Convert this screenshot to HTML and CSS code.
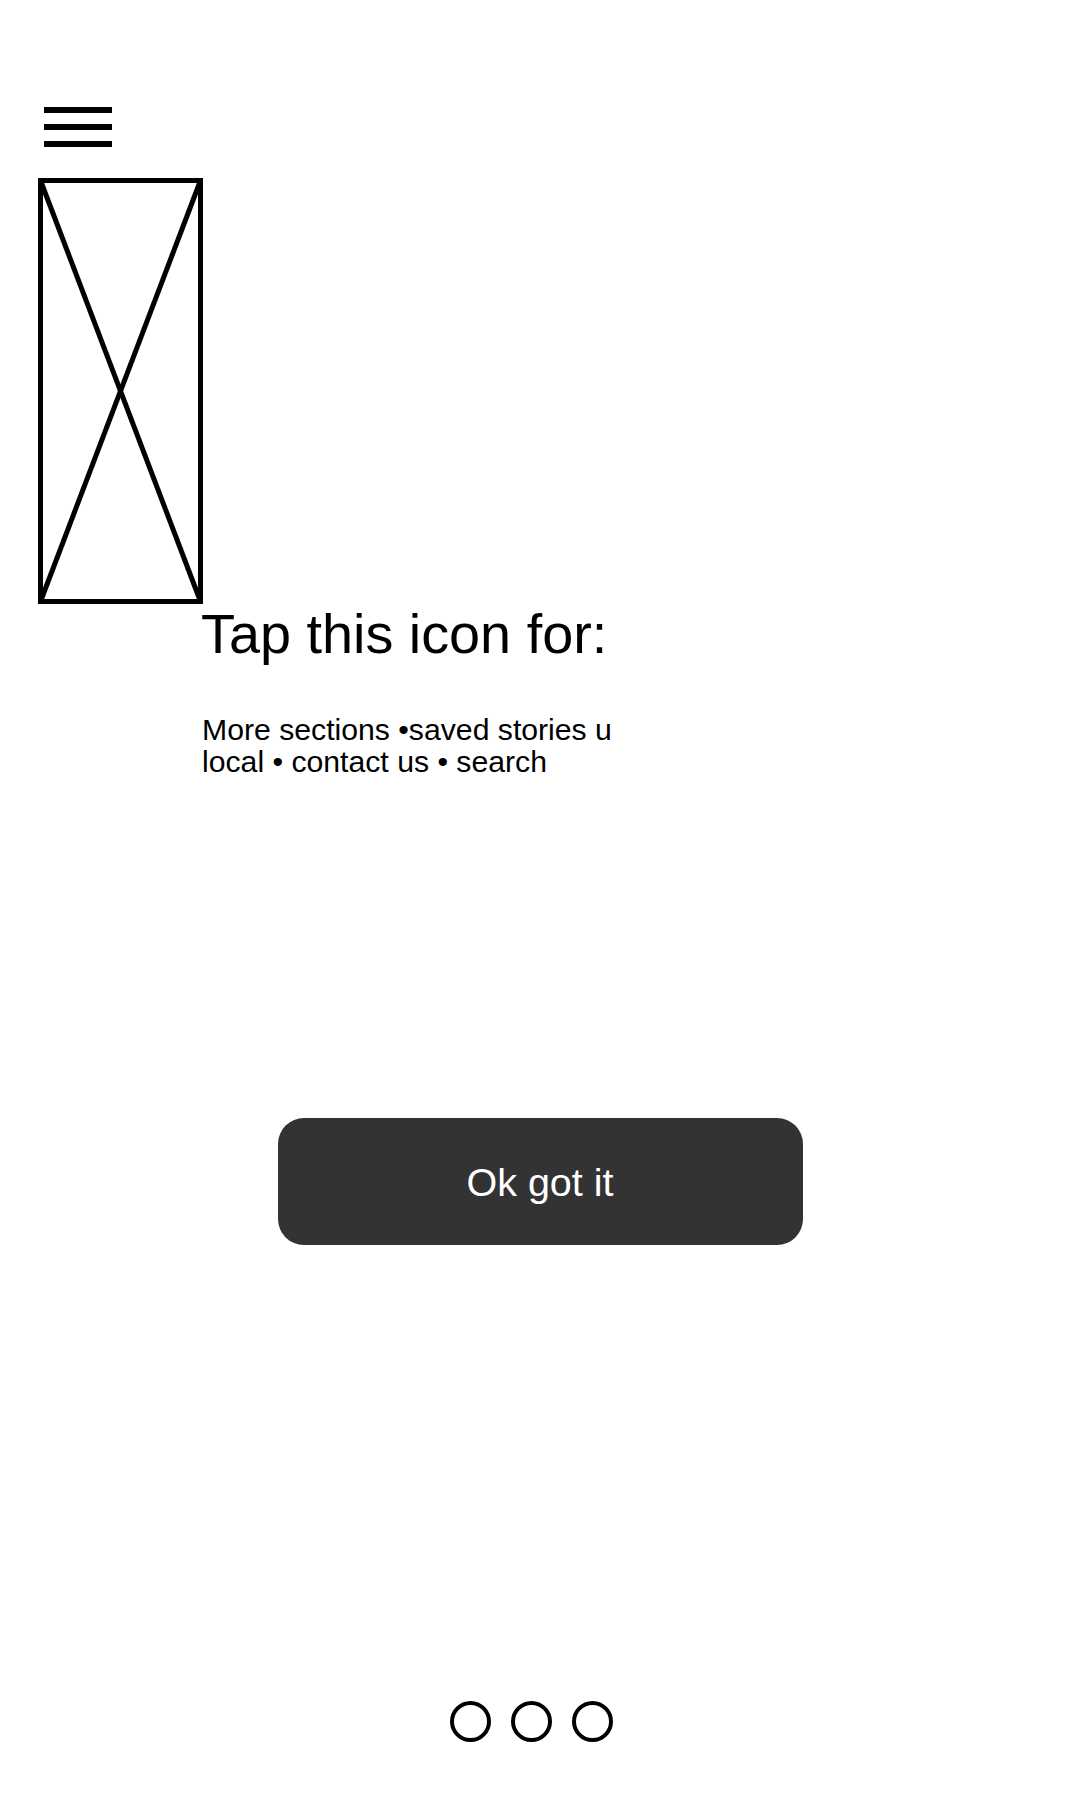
FILE: index.html
```html
<!DOCTYPE html>
<html lang="en">
<head>
<meta charset="utf-8">
<title>Menu tip</title>
<link rel="stylesheet" href="styles.css">
</head>
<body>
<div class="page">
  <div class="menu-icon" aria-label="Menu">
    <span class="bar"></span>
    <span class="bar"></span>
    <span class="bar"></span>
  </div>
  <svg class="placeholder" width="165" height="426" viewBox="0 0 165 426" aria-hidden="true">
    <rect x="2.5" y="2.5" width="160" height="421" fill="none" stroke="#000" stroke-width="5"/>
    <line x1="2.5" y1="2.5" x2="162.5" y2="423.5" stroke="#000" stroke-width="5"/>
    <line x1="162.5" y1="2.5" x2="2.5" y2="423.5" stroke="#000" stroke-width="5"/>
  </svg>
  <div class="tip">
    <h1 class="tip-title">Tap this icon for:</h1>
    <p class="tip-text">More sections •saved stories u<br>local • contact us • search</p>
  </div>
  <div class="actions">
    <button class="ok-btn" type="button">Ok got it</button>
  </div>
  <div class="dots">
    <span class="dot"></span>
    <span class="dot"></span>
    <span class="dot"></span>
  </div>
</div>
</body>
</html>
```

FILE: styles.css
```css
html, body {
  margin: 0;
  padding: 0;
  background: #ffffff;
}

body {
  font-family: "Liberation Sans", Arial, Helvetica, sans-serif;
  color: #000000;
}

.page {
  width: 1080px;
  height: 1800px;
  box-sizing: border-box;
  padding-top: 107px;
  display: flex;
  flex-direction: column;
}

.menu-icon {
  margin-left: 44px;
  width: 68px;
  display: flex;
  flex-direction: column;
  gap: 11px;
}

.bar {
  display: block;
  width: 68px;
  height: 6px;
  background: #000;
}

.placeholder {
  display: block;
  margin-top: 31px;
  margin-left: 38px;
}

.tip {
  margin-left: 201px;
  margin-top: 2px;
}

.tip-title {
  margin: 0;
  font-weight: normal;
  font-size: 55.8px;
  line-height: 55px;
}

.tip-text {
  margin: 53px 0 0 1px;
  font-size: 30.2px;
  line-height: 32px;
}

.actions {
  display: flex;
  justify-content: center;
  margin-top: 340px;
}

.ok-btn {
  width: 525px;
  height: 127px;
  border: none;
  border-radius: 26px;
  background: #333333;
  color: #ffffff;
  font-family: "Liberation Sans", Arial, Helvetica, sans-serif;
  font-size: 39.5px;
  line-height: 40px;
  padding: 0;
  display: flex;
  align-items: center;
  justify-content: center;
}

.dots {
  margin-top: 456px;
  display: flex;
  justify-content: center;
  gap: 20px;
  padding-right: 18px;
}

.dot {
  width: 41px;
  height: 41px;
  box-sizing: border-box;
  border: 4px solid #000;
  border-radius: 50%;
}
```
